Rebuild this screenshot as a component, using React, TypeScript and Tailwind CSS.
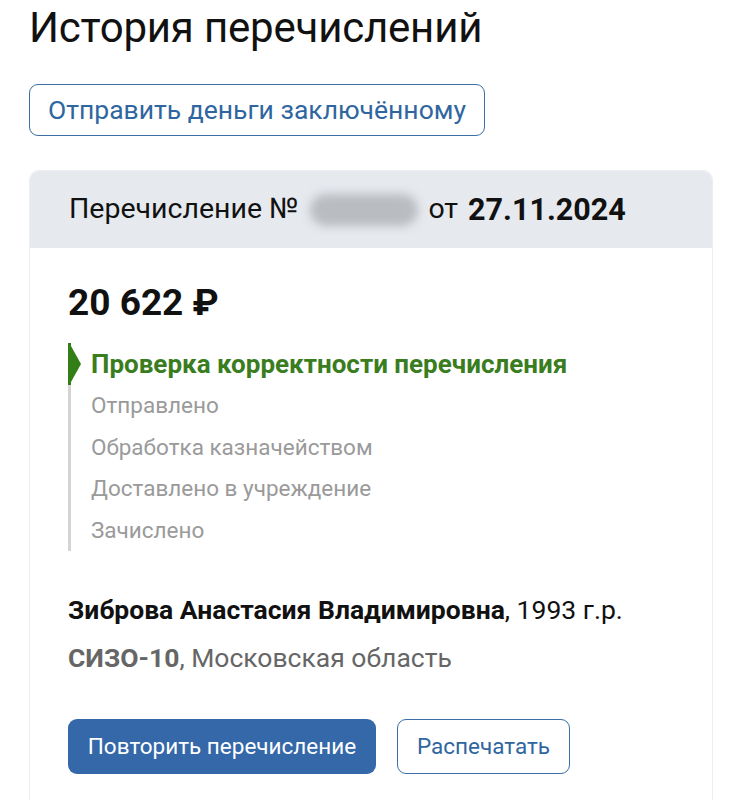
const steps = [
  'Отправлено',
  'Обработка казначейством',
  'Доставлено в учреждение',
  'Зачислено',
];

export default function App() {
  return (
    <div className="min-h-[800px] bg-white px-[29px] pt-[4px] font-['Roboto',sans-serif] text-[#111]">
      <h1 className="text-[42px] leading-[48px] font-normal tracking-[-0.2px]">История перечислений</h1>

      <button className="mt-[32px] h-[52px] w-[456px] rounded-[9px] border border-[#3a6ea5] text-[26.5px] text-[#2f66a0]">
        Отправить деньги заключённому
      </button>

      <div className="mt-[34px] overflow-hidden rounded-t-[10px] border border-[#eceef1]">
        <div className="flex h-[77px] items-center bg-[#e6e9ee] px-[39px] text-[28.5px]">
          <span>Перечисление №</span>
          <span className="mr-[10px] ml-[12px] inline-block h-[32px] w-[108px] rounded-full bg-[#b9bcc0] blur-[5px]" />
          <span>от</span>
          <span className="ml-[10px] text-[30.5px] font-bold">27.11.2024</span>
        </div>

        <div className="px-[38px] pt-[35px] pb-[40px]">
          <div className="text-[37px] leading-[40px] font-bold">20 622 ₽</div>

          <div className="mt-[20px] flex">
            <div className="flex w-[3px] flex-col">
              <div className="h-[42px] bg-[#347e17]" />
              <div className="flex-1 bg-[#d4d4d4]" />
            </div>
            <div className="relative flex flex-col">
              <svg className="absolute top-[3px] left-0" width="10" height="36" viewBox="0 0 10 36">
                <path d="M0 0 L10 18 L0 36 Z" fill="#347e17" />
              </svg>
              <div className="pl-[20px] text-[26px] leading-[42px] font-bold text-[#3a7d1e]">
                Проверка корректности перечисления
              </div>
              {steps.map((s) => (
                <div key={s} className="pl-[20px] text-[22.5px] leading-[41.5px] text-[#9a9a9a]">
                  {s}
                </div>
              ))}
            </div>
          </div>

          <div className="mt-[44px] text-[26.5px] leading-[30px]">
            <span className="font-bold">Зиброва Анастасия Владимировна</span>, 1993 г.р.
          </div>
          <div className="mt-[18px] text-[26.5px] leading-[30px] text-[#666]">
            <span className="font-bold">СИЗО-10</span>, Московская область
          </div>

          <div className="mt-[46px] flex gap-[21px]">
            <button className="h-[55px] w-[308px] rounded-[9px] bg-[#3468a9] text-[22.5px] text-white">
              Повторить перечисление
            </button>
            <button className="h-[55px] w-[173px] rounded-[9px] border border-[#3a6ea5] text-[22.5px] text-[#2f66a0]">
              Распечатать
            </button>
          </div>
        </div>
      </div>
    </div>
  );
}
